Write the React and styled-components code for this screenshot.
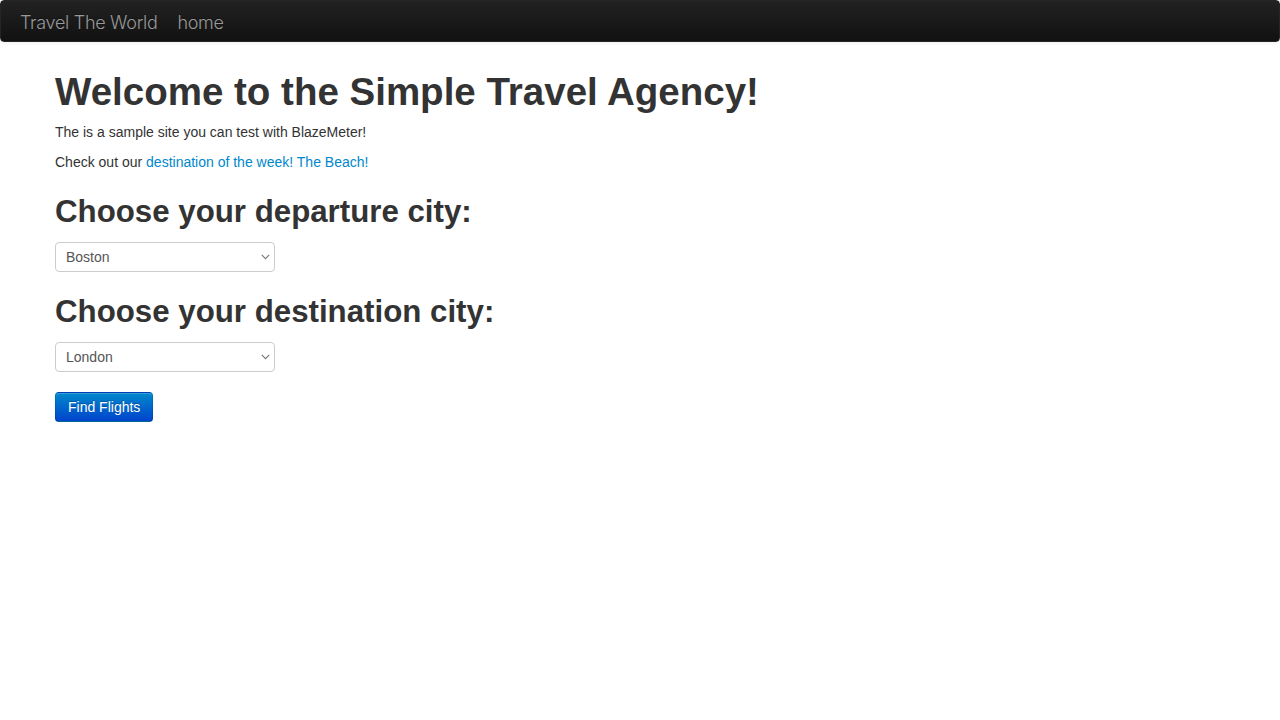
import React, { useState } from 'react';
import styled, { createGlobalStyle } from 'styled-components';

const GlobalStyle = createGlobalStyle`
  html, body {
    margin: 0;
    padding: 0;
    background: #fff;
  }
  body {
    font-family: "Liberation Sans", Arial, sans-serif;
    font-size: 14px;
    line-height: 20px;
    color: #333;
  }
`;

const departures = ['Paris', 'Philadelphia', 'Boston', 'Portland', 'San Diego', 'Mexico City', 'São Paolo'];
const destinations = ['Buenos Aires', 'Rome', 'London', 'Berlin', 'New York', 'Dublin', 'Cairo'];

export default function App() {
  const [from, setFrom] = useState('Boston');
  const [to, setTo] = useState('London');

  return (
    <>
      <GlobalStyle />
      <Navbar>
        <Brand href="#">Travel The World</Brand>
        <NavLink href="#">home</NavLink>
      </Navbar>

      <Container>
        <Title>Welcome to the Simple Travel Agency!</Title>
        <Text>The is a sample site you can test with BlazeMeter!</Text>
        <Text>
          Check out our <Link href="#">destination of the week! The Beach!</Link>
        </Text>

        <Form onSubmit={(e) => e.preventDefault()}>
          <Heading>Choose your departure city:</Heading>
          <Field>
            <Select value={from} onChange={(e) => setFrom(e.target.value)}>
              {departures.map((c) => (
                <option key={c}>{c}</option>
              ))}
            </Select>
            <Chevron />
          </Field>

          <Heading>Choose your destination city:</Heading>
          <Field>
            <Select value={to} onChange={(e) => setTo(e.target.value)}>
              {destinations.map((c) => (
                <option key={c}>{c}</option>
              ))}
            </Select>
            <Chevron />
          </Field>

          <PrimaryBtn type="submit">Find Flights</PrimaryBtn>
        </Form>
      </Container>
    </>
  );
}

function Chevron() {
  return (
    <ChevronIcon width="9" height="6" viewBox="0 0 9 6">
      <path d="M0.8 0.8 L4.5 4.6 L8.2 0.8" fill="none" stroke="#777" strokeWidth="1.1" />
    </ChevronIcon>
  );
}

/* ---------- styles ---------- */

const Navbar = styled.nav`
  height: 40px;
  display: flex;
  align-items: center;
  padding: 0 19px;
  background-image: linear-gradient(to bottom, #222222, #111111);
  border: 1px solid #252525;
  border-radius: 4px;
  box-shadow: 0 1px 4px rgba(0, 0, 0, 0.065);
`;

const Brand = styled.a`
  padding-top: 3px;
  font-family: Inter, "Liberation Sans", sans-serif;
  font-weight: 300;
  font-size: 18px;
  letter-spacing: -0.3px;
  color: #999;
  text-decoration: none;
  text-shadow: 0 -1px 0 rgba(0, 0, 0, 0.25);
  margin-right: 20px;
`;

const NavLink = styled(Brand)`
  margin-right: 0;
`;

const Container = styled.div`
  width: 1170px;
  margin: 0 auto;
  padding-top: 20px;
`;

const Title = styled.h1`
  margin: 10px 0;
  font-size: 38.5px;
  line-height: 40px;
  font-weight: bold;
  color: #333;
`;

const Heading = styled.h2`
  margin: 20px 0 10px;
  font-size: 31.25px;
  line-height: 40px;
  font-weight: bold;
  color: #333;
`;

const Text = styled.p`
  margin: 0 0 10px;
  font-size: 14px;
`;

const Link = styled.a`
  color: #0088cc;
  text-decoration: none;
`;

const Form = styled.form`
  margin: 0;
`;

const Field = styled.div`
  position: relative;
  width: 220px;
  height: 30px;
  margin-bottom: 20px;
`;

const Select = styled.select`
  appearance: none;
  width: 220px;
  height: 30px;
  padding: 4px 10px;
  border: 1px solid #ccc;
  border-radius: 4px;
  background: #fff;
  font-family: "Liberation Sans", Arial, sans-serif;
  font-size: 14px;
  color: #555;
  outline: none;
`;

const ChevronIcon = styled.svg`
  position: absolute;
  right: 5px;
  top: 12px;
  pointer-events: none;
`;

const PrimaryBtn = styled.button`
  height: 30px;
  padding: 0 12px;
  border: 1px solid #0044cc;
  border-color: rgba(0, 0, 0, 0.1) rgba(0, 0, 0, 0.1) rgba(0, 0, 0, 0.25);
  border-radius: 4px;
  background-image: linear-gradient(to bottom, #0088cc, #0044cc);
  color: #fff;
  font-family: "Liberation Sans", Arial, sans-serif;
  font-size: 14px;
  text-shadow: 0 -1px 0 rgba(0, 0, 0, 0.25);
  box-shadow: inset 0 1px 0 rgba(255, 255, 255, 0.2), 0 1px 2px rgba(0, 0, 0, 0.05);
  cursor: pointer;
`;
